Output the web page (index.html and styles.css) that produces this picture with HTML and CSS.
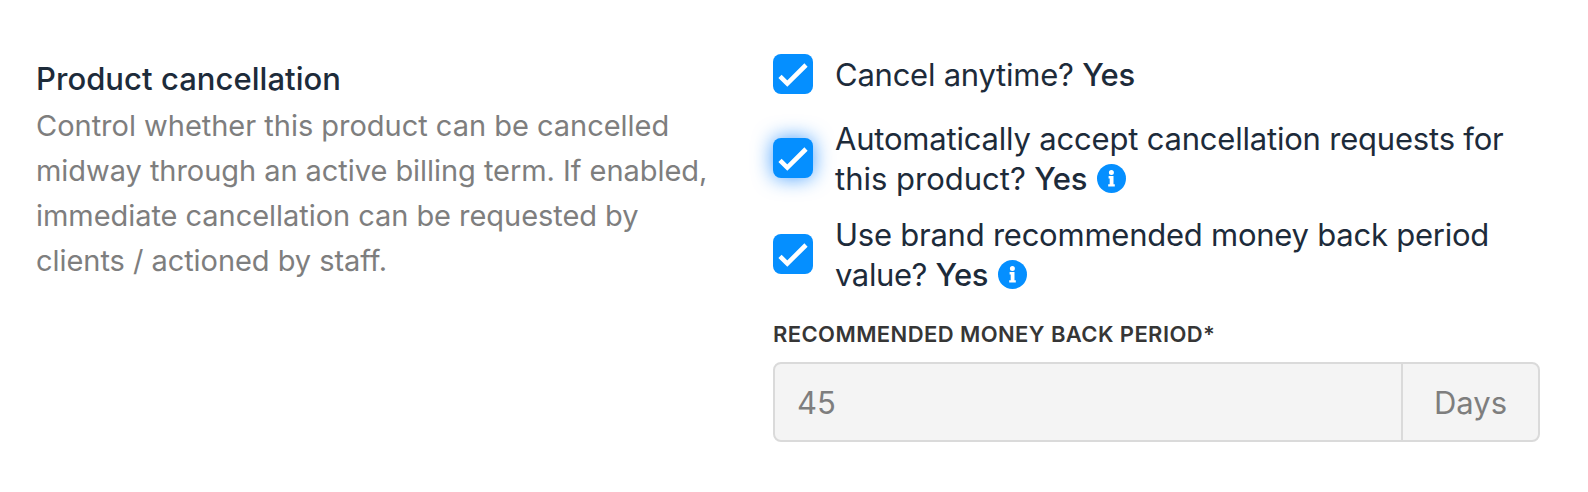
FILE: index.html
```
<!DOCTYPE html>
<html lang="en">
<head>
<meta charset="utf-8">
<title>Product cancellation</title>
<link rel="stylesheet" href="styles.css">
</head>
<body>
<main class="settings">
  <section class="intro">
    <h2 class="title">Product cancellation</h2>
    <p class="description"><span class="wide">Control whether this product can be cancelled</span><br>midway through an active billing term. If enabled,<br>immediate cancellation can be requested by<br>clients / actioned by staff.</p>
  </section>
  <section class="options">
    <div class="option">
      <span class="checkbox" role="checkbox" aria-checked="true"><svg class="check" viewBox="0 0 40 40"><path d="M7 22.4 14.3 29.6 33 11"/></svg></span>
      <span class="option-text snug">Cancel anytime? <strong>Yes</strong></span>
    </div>
    <div class="option">
      <span class="checkbox focused" role="checkbox" aria-checked="true"><svg class="check" viewBox="0 0 40 40"><path d="M7 22.4 14.3 29.6 33 11"/></svg></span>
      <span class="option-text">Automatically accept cancellation requests for<br><span class="loose">this product?</span> <strong>Yes</strong><svg class="info" viewBox="0 0 29 29"><circle cx="14.5" cy="14.5" r="14.5"/><path d="M11.6 12.1h4.9v8.2h1.3v2.3h-6.6v-2.3h1.5v-5.9h-1.1zM14.4 5.9a2.5 2.5 0 1 1 0 5a2.5 2.5 0 1 1 0-5z"/></svg></span>
    </div>
    <div class="option">
      <span class="checkbox" role="checkbox" aria-checked="true"><svg class="check" viewBox="0 0 40 40"><path d="M7 22.4 14.3 29.6 33 11"/></svg></span>
      <span class="option-text"><span class="snug">Use brand recommended money back period</span><br><span class="tight">value?</span> <strong>Yes</strong><svg class="info" viewBox="0 0 29 29"><circle cx="14.5" cy="14.5" r="14.5"/><path d="M11.6 12.1h4.9v8.2h1.3v2.3h-6.6v-2.3h1.5v-5.9h-1.1zM14.4 5.9a2.5 2.5 0 1 1 0 5a2.5 2.5 0 1 1 0-5z"/></svg></span>
    </div>
    <div class="field-label">RECOMMENDED MONEY BACK PERIOD*</div>
    <div class="field">
      <span class="value">45</span>
      <span class="unit">Days</span>
    </div>
  </section>
</main>
</body>
</html>
```
FILE: styles.css
```
* { box-sizing: border-box; }
body {
  margin: 0;
  background: #fff;
  font-family: Inter, "Liberation Sans", sans-serif;
  color: #1d2b3a;
}
.settings {
  display: grid;
  grid-template-columns: 737px 767px;
  padding-left: 36px;
  height: 492px;
  white-space: nowrap;
}
.intro { padding-top: 57px; }
.title {
  margin: 0;
  font-size: 31px;
  font-weight: 500;
  line-height: 44px;
  letter-spacing: 0.05px;
}
.description {
  margin: 2px 0 0;
  font-size: 29px;
  line-height: 45px;
  letter-spacing: -0.05px;
  color: #7e7e7e;
}
.wide { letter-spacing: -0.02px; }
.options { padding-top: 54px; }
.option {
  display: flex;
  align-items: center;
  gap: 22px;
  margin-bottom: 16px;
}
.option:first-child { margin-bottom: 24px; }
.checkbox {
  flex: none;
  width: 40px;
  height: 40px;
  border-radius: 8px;
  background: #058fff;
}
.focused { box-shadow: 0 0 20px rgba(5, 125, 255, 0.75); }
.check { display: block; fill: none; stroke: #fff; stroke-width: 4.6; }
.option-text {
  margin: 1px 0 -1px;
  font-size: 31px;
  line-height: 40px;
  letter-spacing: -0.2px;
}
.option-text strong { font-weight: 500; letter-spacing: -0.4px; }
.snug { letter-spacing: -0.24px; }
.loose { letter-spacing: 0; }
.tight { letter-spacing: -0.4px; }
.info {
  width: 29px;
  height: 29px;
  margin-left: 10px;
  vertical-align: -3px;
}
.info circle { fill: #058fff; }
.info path { fill: #fff; }
.field-label {
  margin-top: 26px;
  font-size: 22px;
  line-height: 28px;
  font-weight: 600;
  letter-spacing: 0.41px;
  color: #363636;
}
.field {
  display: flex;
  height: 80px;
  margin-top: 14px;
  border: 2px solid #dadada;
  border-radius: 8px;
  background: #f4f4f4;
  color: #7e7e7e;
  font-size: 31px;
  line-height: 78px;
}
.value { flex: 1; padding-left: 22px; }
.unit {
  width: 137px;
  border-left: 2px solid #dadada;
  text-align: center;
}
```
